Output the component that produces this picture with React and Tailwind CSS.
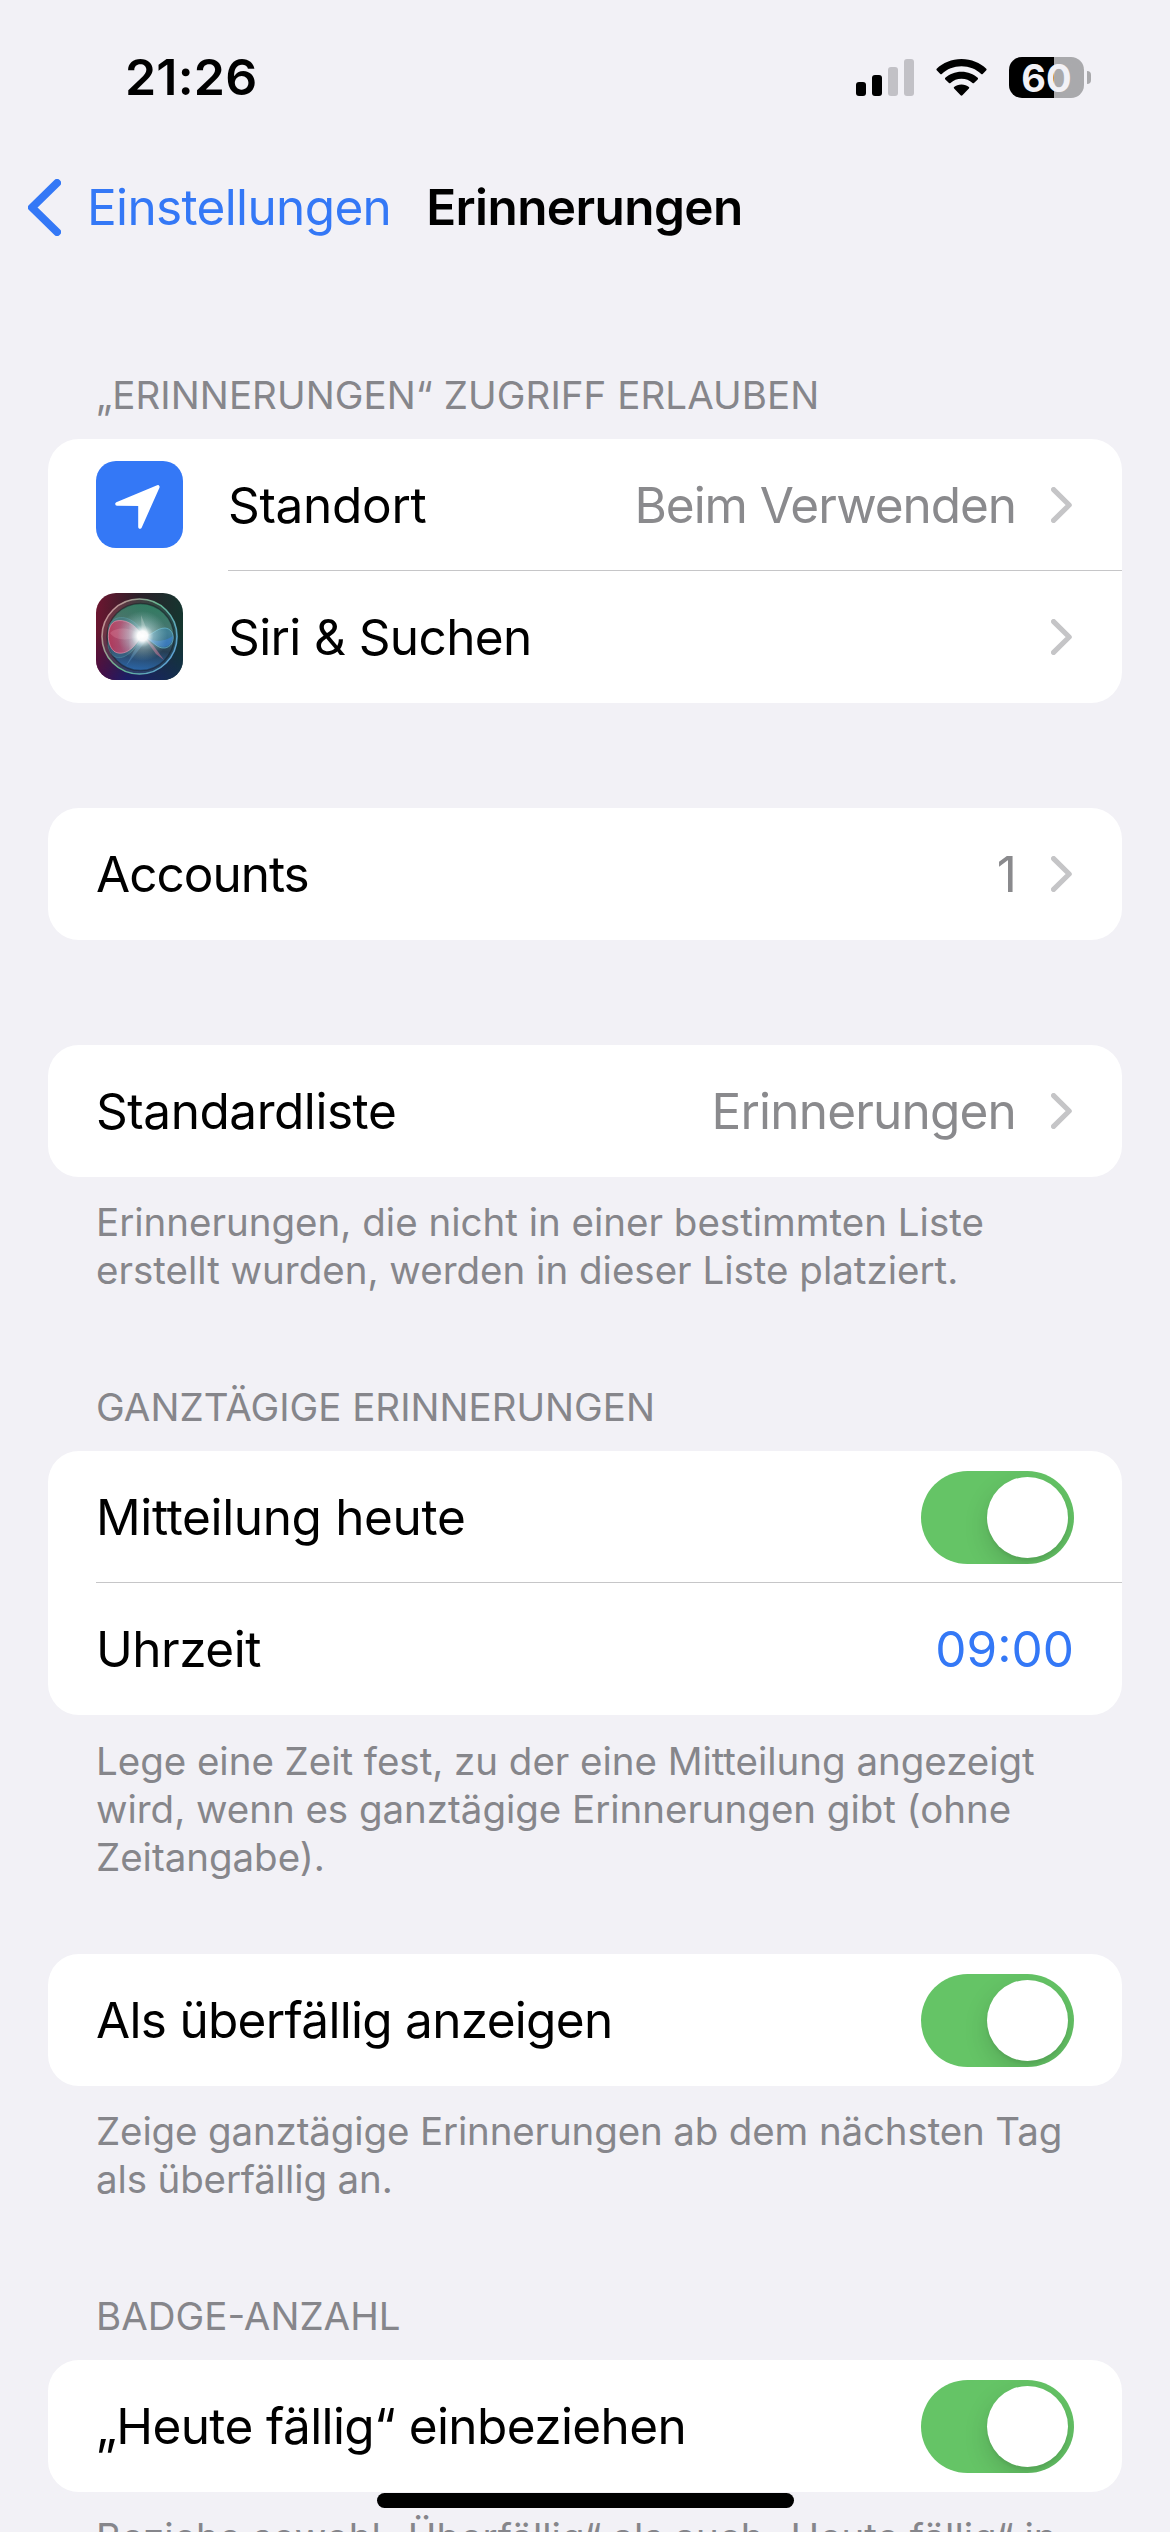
const Chevron = () => (
  <svg className="mr-[2px] ml-[35px] h-9 w-[21px] shrink-0" viewBox="0 0 21 36" fill="none">
    <path d="M2.600 2.600L18.200 18L2.600 33.400" stroke="#c5c5c7" strokeWidth="5.200" strokeLinecap="round" strokeLinejoin="round" />
  </svg>
);

const Switch = () => (
  <button className="mt-px flex h-[93px] w-[153px] shrink-0 items-center justify-end overflow-hidden rounded-full bg-[#65c466] p-[6px]">
    <span className="size-[81px] rounded-full bg-white shadow-[0_9px_24px_rgba(0,0,0,0.15),0_3px_3px_rgba(0,0,0,0.06)]" />
  </button>
);

const LocationIcon = () => (
  <svg className="size-[87px] shrink-0" viewBox="0 0 87 87">
    <rect width="87" height="87" rx="20" fill="#3478f6" />
    <path
      d="M21 42.900L61.800 25.900L44 66V43.300z"
      fill="#fff"
      stroke="#fff"
      strokeWidth="3.600"
      strokeLinejoin="round"
    />
  </svg>
);

const SiriIcon = () => (
  <svg className="size-[87px] shrink-0" viewBox="0 0 87 87">
    <defs>
      <clipPath id="siri-clip">
        <rect width="87" height="87" rx="20" />
      </clipPath>
      <linearGradient id="siri-bg" x1="0" y1="0.300" x2="1" y2="0.400">
        <stop offset="0" stopColor="#6b1630" />
        <stop offset="0.450" stopColor="#2c2029" />
        <stop offset="1" stopColor="#14362f" />
      </linearGradient>
      <linearGradient id="siri-bottom" x1="0" y1="0" x2="1" y2="0">
        <stop offset="0" stopColor="#4b0d45" />
        <stop offset="0.350" stopColor="#1c1d68" />
        <stop offset="1" stopColor="#14304d" />
      </linearGradient>
      <linearGradient id="siri-fade" x1="0" y1="0" x2="0" y2="1">
        <stop offset="0.450" stopColor="#000" />
        <stop offset="1" stopColor="#fff" />
      </linearGradient>
      <mask id="siri-mask">
        <rect width="87" height="87" fill="url(#siri-fade)" />
      </mask>
      <linearGradient id="siri-ring" x1="0" y1="0.200" x2="1" y2="0.800">
        <stop offset="0" stopColor="#d08a94" />
        <stop offset="0.500" stopColor="#62b58f" />
        <stop offset="1" stopColor="#5d9fdc" />
      </linearGradient>
      <linearGradient id="siri-orb" x1="0.550" y1="0" x2="0.450" y2="1">
        <stop offset="0" stopColor="#2f8a68" />
        <stop offset="0.400" stopColor="#527f7c" />
        <stop offset="0.680" stopColor="#263c52" />
        <stop offset="1" stopColor="#2b70b8" />
      </linearGradient>
      <linearGradient id="siri-pink" x1="0" y1="0" x2="1" y2="0">
        <stop offset="0" stopColor="#e02950" />
        <stop offset="0.600" stopColor="#cf5d86" />
        <stop offset="1" stopColor="#fff" />
      </linearGradient>
      <radialGradient id="siri-glow">
        <stop offset="0" stopColor="#fff" />
        <stop offset="0.200" stopColor="#fff" stopOpacity="0.950" />
        <stop offset="0.450" stopColor="#cdeff0" stopOpacity="0.450" />
        <stop offset="1" stopColor="#9fd8d0" stopOpacity="0" />
      </radialGradient>
    </defs>
    <g clipPath="url(#siri-clip)">
      <rect width="87" height="87" fill="url(#siri-bg)" />
      <rect width="87" height="87" fill="url(#siri-bottom)" mask="url(#siri-mask)" />
      <circle cx="43.500" cy="43.500" r="37.500" fill="url(#siri-ring)" fillOpacity="0.220" stroke="url(#siri-ring)" strokeWidth="1.600" />
      <circle cx="44.500" cy="44" r="33.500" fill="url(#siri-orb)" fillOpacity="0.800" stroke="#10151c" strokeOpacity="0.450" strokeWidth="1.500" />
      <path d="M13 33C17 22 34 19 48 40C35 68 16 72 12 53z" fill="#4b86a0" fillOpacity="0.350" stroke="#5fa7b5" strokeOpacity="0.500" strokeWidth="0.800" />
      {/* Left and right lobes */}
      <path d="M46 42C38 30 28 26 20 28C9 31 10 58 22 60C33 62 41 50 46 42z" fill="url(#siri-pink)" fillOpacity="0.700" stroke="#f29ab4" strokeOpacity="0.600" strokeWidth="1" />
      <path d="M14 40C20 33 36 34 47 43C37 46 21 50 14 40z" fill="#ffb3c8" fillOpacity="0.200" />
      <path d="M48 43C56 43 60 35 69 35C80 36 80 53 69 55C60 56 57 47 48 43z" fill="#3b8bb8" fillOpacity="0.500" stroke="#70c4df" strokeOpacity="0.600" strokeWidth="1" />
      <path d="M48 43C57 49 66 50 77 43C75 59 62 56 48 43z" fill="#3d86f0" fillOpacity="0.450" />
      {/* Light rays */}
      <path d="M47 43L57 52L68 67L60 61z" fill="#e0799b" fillOpacity="0.500" />
      <path d="M46 43L30 73L49 49z" fill="#74b5e8" fillOpacity="0.300" />
      <path d="M45 22L53 42L46 45z" fill="#d6d9cf" fillOpacity="0.350" />
      <circle cx="46.500" cy="43" r="25" fill="url(#siri-glow)" />
    </g>
  </svg>
);

const Card = ({ className = '', children }) => (
  <div className={`mx-12 overflow-hidden rounded-[31px] bg-white ${className}`}>{children}</div>
);

const Row = ({
  icon,
  label,
  value,
  control = <Chevron />,
  divider = false,
  labelTracking = 'tracking-[-0.6px]',
  valueTracking = 'tracking-[-0.8px]',
}) => (
  <div className="flex h-[132px] items-stretch pl-12">
    {icon && <div className="mr-[45px] flex items-center pb-px">{icon}</div>}
    <div className={`flex grow items-center justify-between pr-12 ${divider ? 'shadow-[inset_0_-1px_0_#c6c6c8]' : ''}`}>
      <span className={`text-[49.5px] ${labelTracking}`}>{label}</span>
      <div className="flex items-center">
        {value && <span className={`text-[49.5px] text-[#8a8a8d] ${valueTracking}`}>{value}</span>}
        {control}
      </div>
    </div>
  </div>
);

const SectionHeader = ({ className = '', children }) => (
  <h2 className={`h-12 px-24 text-[38.5px] leading-[48px] whitespace-nowrap uppercase text-[#86868b] ${className}`}>
    {children}
  </h2>
);

const Footer = ({ lines, className = 'mt-[21px]' }) => (
  <p className={`px-24 text-[38.5px] leading-[48px] whitespace-nowrap text-[#86868b] ${className}`}>
    {lines.map((line) => (
      <span key={line} className="block">{line}</span>
    ))}
  </p>
);

const StatusBar = () => (
  <div className="flex h-[156px] items-start justify-between pr-[79px] pl-[125px]">
    <span className="mt-[47px] text-[50px] leading-[60px] font-semibold tracking-[0.2px]">21:26</span>
    <div className="mt-[57px] flex">
      <svg className="h-[41px] w-[58px]" viewBox="0 0 58 41">
        <rect y="25" width="10" height="14" rx="3" />
        <rect x="16" y="18" width="10" height="21" rx="3" />
        <rect x="32" y="10" width="10" height="29" rx="3" fill="#c2c1c6" />
        <rect x="48" y="2" width="10" height="37" rx="3" fill="#c2c1c6" />
      </svg>
      <svg className="ml-[22px] h-[41px] w-[51px]" viewBox="0 0 51 41">
        <path d="M25.500 2C35.500 2 44 5.800 50.300 11.700Q51 12.500 50.300 13.300L46.700 16.900Q46 17.500 45.200 16.900C40 12 33.200 9.200 25.500 9.200S11 12 5.800 16.900Q5 17.500 4.300 16.900L.700 13.300Q0 12.500 .700 11.700C7 5.800 15.500 2 25.500 2z" />
        <path d="M25.500 14.700C32 14.700 37.500 17 41.700 20.800Q42.500 21.600 41.700 22.400L38 26Q37.300 26.700 36.500 26C33.500 23.300 29.800 21.800 25.500 21.800S17.500 23.300 14.500 26Q13.700 26.700 13 26L9.300 22.400Q8.500 21.600 9.300 20.800C13.500 17 19 14.700 25.500 14.700z" />
        <path d="M25.500 27.500C28.500 27.500 31 28.400 32.900 30Q33.700 30.800 32.900 31.600L26.400 38.300Q25.500 39 24.600 38.300L18.100 31.600Q17.300 30.800 18.100 30C20 28.400 22.500 27.500 25.500 27.500z" />
      </svg>
      <div className="ml-[22px] flex items-center">
        <div className="flex h-[41px] w-[75px] items-center justify-center rounded-[13px] bg-linear-to-r from-black from-[60%] to-[#a9a9ac] to-[60%]">
          <span className="text-[38px] leading-none font-bold text-[#f2f1f6]">60</span>
        </div>
        <div className="ml-[3px] h-[13px] w-[4px] rounded-r-full bg-[#a9a9ac]" />
      </div>
    </div>
  </div>
);

const NavBar = () => (
  <div className="flex h-[102px] items-center pl-7">
    <svg className="h-[57px] w-[33px]" viewBox="0 0 33 57" fill="none">
      <path d="M29 4L4 28.500L29 53" stroke="#3478f6" strokeWidth="8" strokeLinecap="round" strokeLinejoin="round" />
    </svg>
    <span className="ml-[26px] text-[49.5px] tracking-[-0.65px] text-[#3478f6]">Einstellungen</span>
    <h1 className="ml-[35px] text-[49.5px] font-semibold tracking-[-0.6px]">Erinnerungen</h1>
  </div>
);

export default function App() {
  return (
    <div className="relative h-[2532px] w-[1170px] overflow-hidden bg-[#f2f1f6] font-['Inter',sans-serif] text-black">
      <StatusBar />
      <NavBar />

      <SectionHeader className="mt-[113px] tracking-[0.07px]">„Erinnerungen“ Zugriff erlauben</SectionHeader>
      <Card className="mt-[20px]">
        <Row
          icon={<LocationIcon />}
          label="Standort"
          labelTracking="tracking-[-0.3px]"
          value="Beim Verwenden"
          valueTracking="tracking-[-1.05px]"
          divider
        />
        <Row icon={<SiriIcon />} label="Siri &amp; Suchen" />
      </Card>

      <Card className="mt-[105px]">
        <Row label="Accounts" labelTracking="tracking-[-1px]" value="1" />
      </Card>

      <Card className="mt-[105px]">
        <Row label="Standardliste" labelTracking="tracking-[-0.45px]" value="Erinnerungen" />
      </Card>
      <Footer lines={['Erinnerungen, die nicht in einer bestimmten Liste', 'erstellt wurden, werden in dieser Liste platziert.']} />

      <SectionHeader className="mt-[89px]">Ganztägige Erinnerungen</SectionHeader>
      <Card className="mt-[20px]">
        <Row label="Mitteilung heute" labelTracking="tracking-[-0.35px]" control={<Switch />} divider />
        <Row
          label="Uhrzeit"
          labelTracking="tracking-[-0.5px]"
          control={<span className="text-[49.5px] text-[#3478f6]">09:00</span>}
        />
      </Card>
      <Footer
        className="mt-[22px] tracking-[-0.03px]"
        lines={[
          'Lege eine Zeit fest, zu der eine Mitteilung angezeigt',
          'wird, wenn es ganztägige Erinnerungen gibt (ohne',
          'Zeitangabe).',
        ]}
      />

      <Card className="mt-[73px]">
        <Row label="Als überfällig anzeigen" labelTracking="tracking-[-0.7px]" control={<Switch />} />
      </Card>
      <Footer
        className="mt-[21px] tracking-[-0.14px]"
        lines={['Zeige ganztägige Erinnerungen ab dem nächsten Tag', 'als überfällig an.']}
      />

      <SectionHeader className="mt-[89px]">Badge-Anzahl</SectionHeader>
      <Card className="mt-[20px]">
        <Row label="„Heute fällig“ einbeziehen" control={<Switch />} />
      </Card>
      <Footer lines={['Beziehe sowohl „Überfällig“ als auch „Heute fällig“ in']} />

      {/* Home indicator */}
      <div className="absolute top-[2493px] left-[377px] h-[15px] w-[417px] rounded-full bg-black" />
    </div>
  );
}
